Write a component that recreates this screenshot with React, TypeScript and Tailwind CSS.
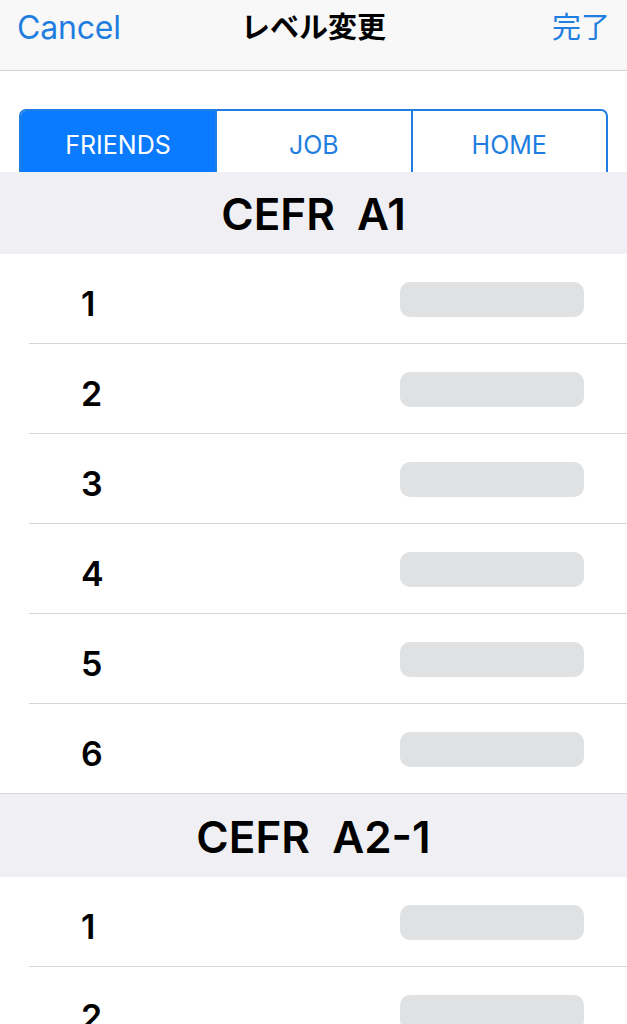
import React from "react";

const font = {
  fontFamily: '"Inter", "Noto Sans CJK JP", sans-serif',
};

const sections = [
  { title: "CEFR\u00a0\u00a0A1", rows: [1, 2, 3, 4, 5, 6] },
  { title: "CEFR\u00a0\u00a0A2-1", rows: [1, 2] },
];

const Row: React.FC<{ n: number; last: boolean }> = ({ n, last }) => {
  return (
    <div className="relative h-[90px] flex items-center bg-white">
      <div className="w-[81px]" />
      <span className="text-[34px] font-semibold text-black leading-none pt-[10px]">
        {n}
      </span>
      <div className="flex-1" />
      <div className="w-[184px] h-[35px] rounded-[10px] bg-[#e0e1e3] mr-[43px]" />
      <div
        className={
          last
            ? "absolute bottom-0 left-0 right-0 h-px bg-[#d6d6da]"
            : "absolute bottom-0 left-[29px] right-0 h-px bg-[#d6d6da]"
        }
      />
    </div>
  );
};

const App: React.FC = () => {
  return (
    <div className="w-[627px] h-[1024px] overflow-hidden bg-white" style={font}>
      <div className="h-[71px] bg-[#f8f8f8] border-b border-[#d2d2d4] grid grid-cols-[1fr_auto_1fr] items-start px-[17px] pt-[9px]">
        <span className="text-[32px] text-[#1f7ee0] leading-[38px] tracking-[-0.2px] justify-self-start">
          Cancel
        </span>
        <span className="text-[29px] font-bold text-black leading-[38px]">
          レベル変更
        </span>
        <span className="text-[29px] text-[#1f7ee0] leading-[38px] justify-self-end">
          完了
        </span>
      </div>
      <div className="h-[101px] overflow-hidden px-[19px] pt-[38px]">
        <div className="h-[80px] flex border-2 border-[#1f7ee0] rounded-[7px] overflow-hidden">
          <div className="w-[194px] bg-[#0a7aff] text-white text-[25px] flex items-start justify-center pt-[16px]">
            FRIENDS
          </div>
          <div className="flex-1 border-l-2 border-[#1f7ee0] text-[#1f7ee0] text-[25px] flex items-start justify-center pt-[16px]">
            JOB
          </div>
          <div className="flex-1 border-l-2 border-[#1f7ee0] text-[#1f7ee0] text-[25px] flex items-start justify-center pt-[16px]">
            HOME
          </div>
        </div>
      </div>
      {sections.map((s, si) => (
        <div key={s.title}>
          <div
            className={
              si === 0
                ? "h-[82px] bg-[#efeff4] flex items-center justify-center"
                : "h-[83px] bg-[#efeff4] flex items-center justify-center"
            }
          >
            <span className="text-[44px] font-semibold text-black leading-none pt-[2px]">
              {s.title}
            </span>
          </div>
          {s.rows.map((n, i) => (
            <Row key={n} n={n} last={i === s.rows.length - 1} />
          ))}
        </div>
      ))}
    </div>
  );
};

export default App;
